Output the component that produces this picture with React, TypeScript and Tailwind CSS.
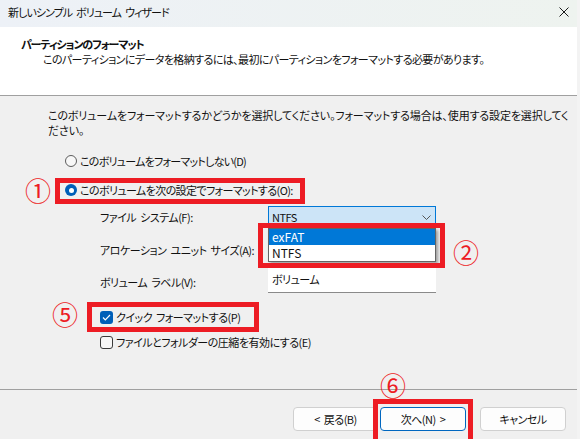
function S({ w = 4 }: { w?: number }) {
  return w === 4 ? <span className="inline-block w-[4px]" /> : <span className="inline-block w-[3px]" />;
}

export default function App() {
  return (
    <div className="relative w-[580px] h-[439px] overflow-hidden bg-[#f3f3f3] text-[11px] tracking-[-0.5px] text-[#111] font-['Noto_Sans_CJK_JP',sans-serif] [font-feature-settings:'palt'] whitespace-nowrap">
      <div className="w-[577px] h-full flex flex-col bg-[#f0f0f0]">
        {/* title bar */}
        <div className="h-[27px] pb-[3px] flex items-center pl-[8px] pr-[8px] bg-gradient-to-r from-[#edf1f7] to-[#eef3ef]">
          <span className="leading-[15px] tracking-[-0.95px]">新しいシンプル<S />ボリューム<S />ウィザード</span>
          <svg className="ml-auto" width="10" height="10" viewBox="0 0 10 10">
            <path d="M0.5 0.5 L9.5 9.5 M9.5 0.5 L0.5 9.5" stroke="#1a1a1a" strokeWidth="1" fill="none" />
          </svg>
        </div>
        {/* header */}
        <div className="h-[69px] bg-white border-b border-[#a0a0a0] pl-[21px] pt-[10px]">
          <div className="font-bold leading-[15px] tracking-[-1.1px]">パーティションのフォーマット</div>
          <div className="pl-[22px] leading-[15px] tracking-[-0.6px]">このパーティションにデータを格納するには、最初にパーティションをフォーマットする必要があります。</div>
        </div>
        {/* body */}
        <div className="flex-1 flex flex-col pl-[48px] pt-[12px]">
          <p className="leading-[15px] tracking-[-0.13px]">
            このボリュームをフォーマットするかどうかを選択してください。フォーマットする場合は、使用する設定を選択してく
            <br />
            ださい。
          </p>
          <div className="mt-[13px] h-[20px] flex items-center pl-[17px]">
            <span className="w-[12px] h-[12px] rounded-full border border-[#5c5c5c] bg-[#f7f7f7]" />
            <span className="ml-[3px] tracking-[-0.75px]">このボリュームをフォーマットしない(D)</span>
          </div>
          <div className="mt-[9px] h-[20px] flex items-center pl-[17px]">
            <span className="w-[12px] h-[12px] rounded-full bg-[#005fb8] flex items-center justify-center">
              <span className="w-[5px] h-[5px] rounded-full bg-white" />
            </span>
            <span className="ml-[3px] tracking-[-0.6px]">このボリュームを次の設定でフォーマットする(O):</span>
          </div>
          <div className="mt-[6px] h-[22px] flex items-center pl-[52px]">
            <span className="w-[168px]">ファイル<S />システム(F):</span>
            <div className="w-[168px] h-[22px] border border-[#0078d7] bg-[#cce4f7] flex items-center pl-[3px] pr-[4px]">
              <span>NTFS</span>
              <svg className="ml-auto" width="9" height="5" viewBox="0 0 9 5">
                <path d="M0.5 0.5 L4.5 4.5 L8.5 0.5" stroke="#555" strokeWidth="1" fill="none" />
              </svg>
            </div>
          </div>
          <div className="mt-[11px] h-[22px] flex items-center pl-[52px]">
            <span className="w-[168px]">アロケーション<S />ユニット<S />サイズ(A):</span>
          </div>
          <div className="mt-[2px] h-[30px] flex items-start pl-[52px]">
            <span className="w-[168px] mt-[12px] leading-[15px]">ボリューム<S />ラベル(V):</span>
            <div className="w-[168px] h-[30px] bg-white border-b border-[#8a8a8a] pl-[4px] pt-[9px] leading-[15px]">ボリューム</div>
          </div>
          <div className="mt-[14px] h-[20px] flex items-center pl-[52px]">
            <span className="w-[13px] h-[13px] rounded-[3px] bg-[#005fb8] flex items-center justify-center">
              <svg width="9" height="7" viewBox="0 0 9 7">
                <path d="M1 3.5 L3.3 5.8 L8 1" stroke="white" strokeWidth="1.2" fill="none" />
              </svg>
            </span>
            <span className="ml-[3px]">クイック<S />フォーマットする(P)</span>
          </div>
          <div className="mt-[5px] h-[20px] flex items-center pl-[52px]">
            <span className="w-[13px] h-[13px] rounded-[3px] border border-[#3a3a3a] bg-[#f7f7f7]" />
            <span className="ml-[3px]">ファイルとフォルダーの圧縮を有効にする(E)</span>
          </div>
        </div>
        {/* footer */}
        <div className="h-[50px] border-t border-[#a0a0a0] pt-[17px] pr-[11px] flex justify-end items-start">
          <button className="w-[85px] h-[24px] rounded-[4px] border border-[#d0d0d0] bg-[#fdfdfd] flex items-center justify-center">&lt;<S />戻る(B)</button>
          <button className="ml-[2px] w-[86px] h-[24px] rounded-[4px] border border-[#0067c0] bg-[#fdfdfd] flex items-center justify-center">次へ(N)<S />&gt;</button>
          <button className="ml-[14px] w-[86px] h-[24px] rounded-[4px] border border-[#d0d0d0] bg-[#fdfdfd] flex items-center justify-center">キャンセル</button>
        </div>
      </div>

      {/* dropdown popup */}
      <div className="absolute left-[268px] top-[228px] w-[168px] border border-[#646464] bg-white shadow-[2px_2px_3px_rgba(0,0,0,0.35)]">
        <div className="h-[16px] bg-[#0078d7] text-white pl-[3px] leading-[16px] text-[12px] tracking-normal">exFAT</div>
        <div className="h-[16px] pl-[3px] leading-[16px] text-[12px] tracking-normal">NTFS</div>
      </div>

      {/* annotations */}
      <div className="absolute left-[55px] top-[178px] w-[250px] h-[26px] border-[5px] border-[#ed1c24]" />
      <div className="absolute left-[258px] top-[223px] w-[187px] h-[45px] border-[5px] border-[#ed1c24]" />
      <div className="absolute left-[87px] top-[302px] w-[172px] h-[30px] border-[5px] border-[#ed1c24]" />
      <div className="absolute left-[373px] top-[399px] w-[100px] h-[45px] border-[5px] border-[#ed1c24]" />

      <span className="absolute left-[25px] top-[177px] text-[26px] leading-[26px] tracking-normal text-[#ed1c24] font-normal">①</span>
      <span className="absolute left-[453px] top-[239px] text-[26px] leading-[26px] tracking-normal text-[#ed1c24] font-normal">②</span>
      <span className="absolute left-[52px] top-[301px] text-[26px] leading-[26px] tracking-normal text-[#ed1c24] font-normal">⑤</span>
      <span className="absolute left-[380px] top-[372px] text-[26px] leading-[26px] tracking-normal text-[#ed1c24] font-normal">⑥</span>
    </div>
  );
}
